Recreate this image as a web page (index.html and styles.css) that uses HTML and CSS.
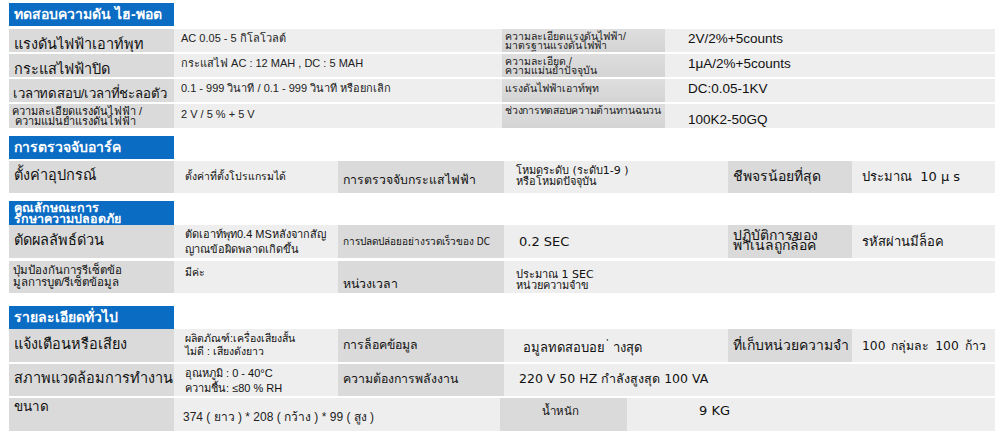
FILE: index.html
```html
<!DOCTYPE html>
<html lang="th">
<head>
<meta charset="utf-8">
<title>Spec</title>
<link rel="stylesheet" href="styles.css">
</head>
<body>
<div class="page">

  <section class="sec sec1">
    <div class="hdr">ทดสอบความดัน ไฮ-พอต</div>
    <div class="row g4 h23">
      <div class="c dark lbl-big">แรงดันไฟฟ้าเอาท์พุท</div>
      <div class="c light val-sm">AC 0.05 - 5 กิโลโวลต์</div>
      <div class="c dark lbl-xs two">ความละเอียดแรงดันไฟฟ้า/<br>มาตรฐานแรงดันไฟฟ้า</div>
      <div class="c light val-md">2V/2%+5counts</div>
    </div>
    <div class="row g4 h23">
      <div class="c dark lbl-big">กระแสไฟฟ้าปิด</div>
      <div class="c light val-sm">กระแสไฟ AC : 12 MAH , DC : 5 MAH</div>
      <div class="c dark lbl-xs two">ความละเอียด /<br>ความแม่นยำปัจจุบัน</div>
      <div class="c light val-md">1μA/2%+5counts</div>
    </div>
    <div class="row g4 h23">
      <div class="c dark lbl-big narrow">เวลาทดสอบ/เวลาที่ชะลอตัว</div>
      <div class="c light val-sm">0.1 - 999 วินาที / 0.1 - 999 วินาที หรือยกเลิก</div>
      <div class="c dark lbl-xs one">แรงดันไฟฟ้าเอาท์พุท</div>
      <div class="c light val-md">DC:0.05-1KV</div>
    </div>
    <div class="row g4 h24">
      <div class="c dark lbl-two">ความละเอียดแรงดันไฟฟ้า /<br>&nbsp;ความแม่นยำแรงดันไฟฟ้า</div>
      <div class="c light val-sm">2 V / 5 % + 5 V</div>
      <div class="c dark lbl-xs one tight">ช่วงการทดสอบความต้านทานฉนวน</div>
      <div class="c light val-md low">100K2-50GQ</div>
    </div>
  </section>

  <section class="sec sec2">
    <div class="hdr">การตรวจจับอาร์ค</div>
    <div class="row g6 h32">
      <div class="c dark lbl-big mid">ตั้งค่าอุปกรณ์</div>
      <div class="c light val-xs top pt9">ตั้งค่าที่ตั้งโปรแกรมได้</div>
      <div class="c dark lbl-md bottom pb5">การตรวจจับกระแสไฟฟ้า</div>
      <div class="c light val-t two-t">โหมดระดับ (ระดับ1-9 )<br>หรือโหมดปัจจุบัน</div>
      <div class="c dark lbl-t mid">ชีพจรน้อยที่สุด</div>
      <div class="c light val-t2 mid">ประมาณ&nbsp; 10 μ s</div>
    </div>
  </section>

  <section class="sec sec3">
    <div class="hdr hdr-two">คุณลักษณะการ<br>รักษาความปลอดภัย</div>
    <div class="row g6 h33">
      <div class="c dark lbl-big mid">ตัดผลลัพธ์ด่วน</div>
      <div class="c light val-xs two-v big">ตัดเอาท์พุท0.4 MSหลังจากสัญ<br>ญาณข้อผิดพลาดเกิดขึ้น</div>
      <div class="c dark lbl-tiny mid">การปลดปล่อยอย่างรวดเร็วของ DC</div>
      <div class="c light val-t2 mid pl15">0.2 SEC</div>
      <div class="c dark lbl-t two-l">ปฏิบัติการของ<br>พาเนลถูกล็อค</div>
      <div class="c light val-t2 mid">รหัสผ่านมีล็อค</div>
    </div>
    <div class="row g6 h32">
      <div class="c dark lbl-two13">ปุ่มป้องกันการรีเซ็ตข้อ<br>มูลการบูต/รีเซ็ตข้อมูล</div>
      <div class="c light val-xs top">มีค่ะ</div>
      <div class="c dark lbl-md bottom">หน่วงเวลา</div>
      <div class="c light val-t two-s span3">ประมาณ 1 SEC<br>หน่วยความจำข</div>
    </div>
  </section>

  <section class="sec sec4">
    <div class="hdr">รายละเอียดทั่วไป</div>
    <div class="row g6 h33">
      <div class="c dark lbl-big mid">แจ้งเตือนหรือเสียง</div>
      <div class="c light val-xs two-v">ผลิตภัณฑ์:เครื่องเสียงสั้น<br>ไม่ดี : เสียงดังยาว</div>
      <div class="c dark lbl-md mid">การล็อคข้อมูล</div>
      <div class="c light val-t2 bottom pl19">อมูลทดสอบอย ่ างสุด</div>
      <div class="c dark lbl-t mid">ที่เก็บหน่วยความจำ</div>
      <div class="c light val-t2 mid small">100 กลุ่มละ 100 ก้าว</div>
    </div>
    <div class="row g6 h32">
      <div class="c dark lbl-big mid">สภาพแวดล้อมการทำงาน</div>
      <div class="c light val-xs two-v big">อุณหภูมิ : 0 - 40°C<br>ความชื้น: ≤80 % RH</div>
      <div class="c dark lbl-md mid">ความต้องการพลังงาน</div>
      <div class="c light val-t2 mid pl15 mid2 span3">220 V 50 HZ กำลังสูงสุด 100 VA</div>
    </div>
    <div class="row g-last h33">
      <div class="c dark lbl-big top-big">ขนาด</div>
      <div class="c light val-sm2 low2">374 ( ยาว ) * 208 ( กว้าง ) * 99 ( สูง )</div>
      <div class="c dark lbl-t2 mid center">น้ำหนัก</div>
      <div class="c light val-t2 mid pl72">9 KG</div>
    </div>
  </section>

</div>
</body>
</html>
```

FILE: styles.css
```css
* { box-sizing: border-box; margin: 0; padding: 0; }

html, body {
  background: #ffffff;
  width: 1000px;
  height: 440px;
  overflow: hidden;
}

body {
  font-family: "Liberation Sans", Arial, sans-serif;
  color: #1a1a1a;
}

.page {
  padding: 3px 5px 0 9px;
  width: 1000px;
}

.sec { display: flex; flex-direction: column; }
.sec1 { gap: 2px; }
.sec2 { margin-top: 8px; gap: 1px; }
.sec3 { margin-top: 8px; gap: 3px; }
.sec4 { margin-top: 13px; gap: 2px; }

.hdr {
  width: 165px;
  height: 23px;
  background: #0b6cc4;
  color: #ffffff;
  font-weight: bold;
  font-size: 14px;
  line-height: 23px;
  padding-left: 5px;
  white-space: nowrap;
  margin-bottom: 1px;
}
.sec3 .hdr { margin-bottom: -3px; }
.sec4 .hdr { margin-bottom: -2px; }
.hdr-two {
  height: 24px;
  font-size: 12.5px;
  line-height: 11px;
  padding-top: 2px;
  overflow: visible;
}

.row { display: grid; }
.g4 { grid-template-columns: 165px 328px 163px 330px; }
.g6 { grid-template-columns: 165px 164px 166px 224px 124px 143px; }
.g-last { grid-template-columns: 165px 326px 127px 368px; }

.h23 { height: 23px; }
.h24 { height: 24px; }
.h32 { height: 32px; }
.h33 { height: 33px; }

.c {
  display: flex;
  white-space: nowrap;
  overflow: hidden;
  line-height: 16px;
}
.dark { background: #dadada; }
.light { background: #eeeeee; }

.span3 { grid-column: span 3; }

/* alignment helpers */
.mid { align-items: center; }
.top { align-items: flex-start; }
.bottom { align-items: flex-end; }

/* big left labels */
.lbl-big {
  font-size: 14.5px;
  line-height: 16px;
  padding-left: 5px;
  align-items: flex-end;
  padding-bottom: 0;
  color: #111;
}
.lbl-big.narrow { font-size: 13.2px; letter-spacing: -0.15px; padding-left: 4px; }
.lbl-big.mid { align-items: center; padding-bottom: 4px; }
.lbl-big.top-big { align-items: flex-start; padding-top: 1px; font-size: 13.5px; }

.lbl-two {
  font-size: 11px;
  line-height: 10px;
  padding-left: 3px;
  padding-top: 2px;
  color: #111;
}
.lbl-two13 {
  font-size: 11.5px;
  line-height: 12px;
  padding-left: 4px;
  padding-top: 3px;
  color: #111;
}

.val-sm {
  font-size: 11px;
  line-height: 14px;
  padding-left: 7px;
  align-items: center;
  padding-bottom: 5px;
  color: #222;
}
.val-sm2 {
  font-size: 12px;
  line-height: 14px;
  padding-left: 9px;
  color: #222;
}
.low2 { align-items: flex-end; padding-bottom: 7px; }

.lbl-xs {
  font-size: 10.5px;
  line-height: 9px;
  padding-left: 3px;
  color: #222;
  background: linear-gradient(#dedede, #d4d4d4);
}
.lbl-xs.two { padding-top: 3px; }
.lbl-xs.one { padding-top: 5px; }
.lbl-xs.tight { letter-spacing: -0.25px; padding-top: 2px; }

.val-md {
  font-size: 13.5px;
  line-height: 16px;
  padding-left: 23px;
  align-items: center;
  padding-bottom: 3px;
  color: #111;
}
.val-md.low { align-items: flex-end; padding-bottom: 0; }

.val-xs {
  font-size: 10.5px;
  line-height: 14px;
  padding-left: 11px;
  padding-top: 4px;
  color: #111;
}
.val-xs.pt9 { padding-top: 8px; }
.val-xs.two-v { line-height: 13px; padding-top: 3px; }
.val-xs.big { font-size: 11px; line-height: 15px; padding-top: 2px; }

.lbl-md {
  font-size: 12.3px;
  line-height: 16px;
  padding-left: 5px;
  padding-bottom: 1px;
  color: #111;
}
.lbl-md.pb5 { padding-bottom: 5px; }
.lbl-md.mid { padding-bottom: 2px; }

.lbl-tiny {
  font-size: 10px;
  padding-left: 5px;
  font-family: "DejaVu Sans Condensed", "DejaVu Sans", sans-serif;
  color: #111;
}

.val-t {
  font-family: "DejaVu Sans", Tahoma, sans-serif;
  font-size: 11px;
  line-height: 11px;
  padding-left: 12px;
  color: #111;
}
.two-t { padding-top: 4px; }
.two-s { padding-top: 8px; }

.lbl-t {
  font-family: "DejaVu Sans", Tahoma, sans-serif;
  font-size: 14px;
  padding-left: 5px;
  color: #111;
}
.lbl-t.mid { padding-bottom: 2px; }
.lbl-t.two-l { line-height: 10px; padding-top: 5px; }
.lbl-t2 {
  font-family: "DejaVu Sans", Tahoma, sans-serif;
  font-size: 11.5px;
  padding-bottom: 7px;
  color: #111;
}
.center { justify-content: center; padding-right: 6px; }

.val-t2 {
  font-family: "DejaVu Sans", Tahoma, sans-serif;
  font-size: 13px;
  padding-left: 10px;
  color: #111;
}
.val-t2.small { font-size: 12.3px; word-spacing: 2px; }
.val-t2.mid2 { font-size: 12.5px; padding-bottom: 3px; }
.val-t2.bottom { padding-bottom: 6px; }
.pl15 { padding-left: 15px; }
.pl19 { padding-left: 19px; }
.pl72 { padding-left: 72px; padding-bottom: 7px; }
```
